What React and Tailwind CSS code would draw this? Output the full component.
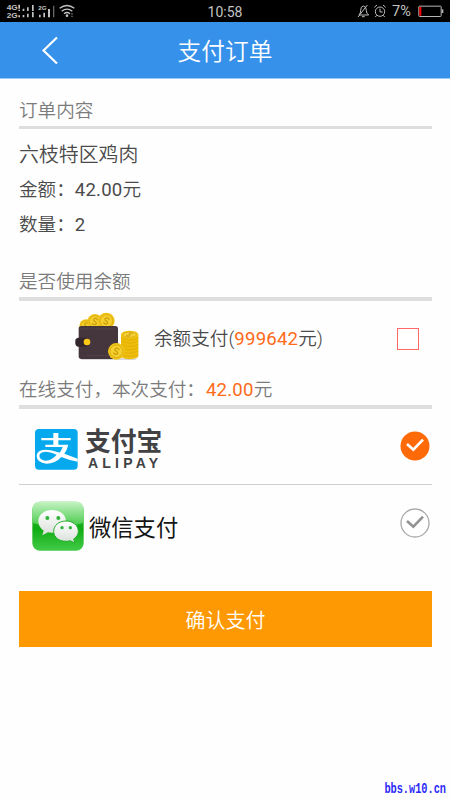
const cjk = "font-['Roboto','Noto_Sans_CJK_SC',sans-serif]";

function StatusBar() {
  return (
    <div className="flex h-[22px] shrink-0 items-center justify-between bg-black">
      <svg className="h-[22px] w-[150px]" viewBox="0 0 450 66" fill="#c4c4c4">
        <g fontFamily="Liberation Sans" fontWeight="700" fontSize="20">
          <text x="20" y="31" textLength="33" lengthAdjust="spacingAndGlyphs">4G</text>
          <text x="20" y="53" textLength="33" lengthAdjust="spacingAndGlyphs">2G</text>
          <text x="115" y="30" fontSize="18" textLength="25" lengthAdjust="spacingAndGlyphs">2G</text>
        </g>
        <path d="M55 14h5v12h-5zM55 29h5v4h-5zM55 46h5v6h-5zM68 26h5v7h-5zM81 22h5v11h-5zM96 15h5v18h-5zM68 45h5v7h-5zM81 41h5v11h-5zM96 36h5v16h-5zM117 44h5v8h-5zM130 38h5v14h-5zM144 27h6v25h-6z" />
        <path d="M159 17h4v35h-4z" fill="#666" />
        <g fill="none" stroke="#c4c4c4" strokeWidth="4">
          <path d="M179 25Q201 8 223 25M185 34Q201 21 217 34M192 41Q201 34 210 41" />
        </g>
        <circle cx="201" cy="47" r="4" />
        <path d="M214 40h4v4h-4zM214 47h4v4h-4z" fill="#777" />
      </svg>
      <span className="pt-[2px] text-[14px] leading-none font-normal text-[#c4c4c4]">10:58</span>
      <div className="flex w-[150px] items-center">
        <svg className="h-[22px] w-[90px]" viewBox="0 0 270 66" fill="none" stroke="#bdbdbd" strokeWidth="3">
          <path d="M177 45Q182 40 182 31Q182 19 190 18Q199 19 199 31Q199 41 206 45ZM186 50h8M202 15L174 51" />
          <circle cx="240" cy="35" r="14" />
          <path d="M240 26v10h8M223 22l8-7M249 15l8 7M230 46l-4 5M250 46l4 5" />
        </svg>
        <span className="w-[28px] pt-[2px] pl-[2px] text-[14.500px] leading-none font-normal text-[#c4c4c4]">7%</span>
        <svg className="h-[22px] w-[32px]" viewBox="0 0 96 66">
          <rect x="2.500" y="18.500" width="67" height="31" rx="2" fill="none" stroke="#b5b5b5" strokeWidth="3" />
          <path d="M71 28h5v11h-5z" fill="#b5b5b5" />
          <path d="M4 21h6v26H4z" fill="#f00" />
        </svg>
      </div>
    </div>
  );
}

function Coin({ x, y, r }) {
  return (
    <g transform={`translate(${x} ${y})`}>
      <circle r={r} fill="#f0c419" />
      <circle r={r * 0.76} fill="#f4cf2d" stroke="#d9aa0d" strokeWidth="2.500" />
      <path d="M7-7Q-1-13-5-7Q-8-2 0 0Q8 2 5 7Q1 12-7 7" fill="none" stroke="#c99a0b" strokeWidth="3.500" transform="rotate(20)" />
    </g>
  );
}

function WalletIcon() {
  return (
    <svg className="h-[65px] w-[85px]" viewBox="0 0 255 195">
      <path d="M45 160H218L210 165H50Z" fill="#d8d8dc" />
      <Coin x={63} y={63} r={20} />
      <Coin x={90} y={50} r={23} />
      <Coin x={124} y={48} r={25} />
      <rect x="41" y="63" width="118" height="99" rx="8" fill="#45363d" />
      <path d="M47 72H153M67 152H150" stroke="#62525a" strokeWidth="2" strokeDasharray="5 4" />
      <path d="M41 98H63Q74 101 74 112Q74 122 63 125H38Q31 122 31 116V107Q31 99 41 98Z" fill="#33272d" />
      <circle cx="66" cy="111" r="10" fill="#fdc914" />
      <path d="M168 88V156Q194 170 220 156V88Z" fill="#eebd0b" />
      <path d="M168 98Q194 111 220 98M168 108Q194 121 220 108M168 118Q194 131 220 118M168 128Q194 141 220 128M168 138Q194 151 220 138M168 148Q194 161 220 148" fill="none" stroke="#deae04" strokeWidth="2.500" />
      <ellipse cx="194" cy="89" rx="26" ry="12" fill="#f2c617" />
      <ellipse cx="194" cy="89" rx="20" ry="8" fill="#f4d139" stroke="#d2a40a" strokeWidth="2" />
      <path d="M203 86Q196 81 192 86Q192 90 196 90Q195 96 184 92" fill="none" stroke="#c99a0b" strokeWidth="3" />
      <Coin x={154} y={139} r={25} />
    </svg>
  );
}

function AlipayIcon() {
  return (
    <svg className="h-[43px] w-[45px]" viewBox="0 0 135 129">
      <rect x="3" y="3" width="128" height="122" rx="12" fill="#06a9ee" />
      <path d="M58 15H73V30H110V37H73V50H103Q99 66 91 77L131 92V101Q108 98 82 87Q64 107 37 107Q9 105 8 85Q8 66 34 65Q52 65 77 74Q83 66 86 57H34V50H58V37H22V30H58ZM68 80Q48 71 34 71Q17 72 16 84Q18 97 35 98Q55 96 68 80Z" fill="#fff" fillRule="evenodd" />
    </svg>
  );
}

function WechatIcon() {
  return (
    <svg className="h-[50px] w-[52px]" viewBox="0 0 156 150">
      <defs>
        <linearGradient id="wxBase" x1="0" y1="0" x2="0" y2="1">
          <stop offset="0" stopColor="#46ca46" />
          <stop offset="0.550" stopColor="#0fac13" />
          <stop offset="1" stopColor="#43cb48" />
        </linearGradient>
        <linearGradient id="wxGloss" x1="0" y1="0" x2="0" y2="1">
          <stop offset="0" stopColor="#c5f3c4" />
          <stop offset="1" stopColor="#42c845" />
        </linearGradient>
        <linearGradient id="wxBubble" x1="0" y1="0" x2="0" y2="1">
          <stop offset="0" stopColor="#fff" />
          <stop offset="1" stopColor="#d9dfd9" />
        </linearGradient>
      </defs>
      <rect x="1" y="2" width="154" height="147" rx="23" fill="url(#wxBase)" />
      <path d="M1 65V25Q1 2 24 2H132Q155 2 155 25V65Q78 90 1 65Z" fill="url(#wxGloss)" />
      <path d="M60 27C37 27 19 41 19 61C19 73 25 82 35 89L31 103L48 94C54 96 66 96 72 94C84 91 102 76 102 59C101 40 83 27 60 27Z" fill="url(#wxBubble)" />
      <path d="M102 60C81 60 65 73 65 91C65 109 81 121 102 121Q109 121 114 119L129 126L125 114C134 108 139 100 139 91C139 73 123 60 102 60Z" fill="url(#wxBubble)" stroke="#27ae2b" strokeWidth="3" />
      <g fill="#2fb33b">
        <circle cx="46" cy="51" r="6" />
        <circle cx="79" cy="51" r="6" />
        <circle cx="90" cy="80" r="5" />
        <circle cx="115" cy="80" r="5" />
      </g>
    </svg>
  );
}

function RadioMark({ checked }) {
  return (
    <svg className="size-[30px]" viewBox="0 0 90 90" fill="none">
      <circle cx="45" cy="45" r={checked ? 43.5 : 42} fill={checked ? "#ff6a08" : "#fff"} stroke={checked ? "none" : "#aaa"} strokeWidth="4" />
      <path d="M21 39L40 56L69 26" stroke={checked ? "#fff" : "#929292"} strokeWidth="8" />
    </svg>
  );
}

export default function App() {
  return (
    <div className={`flex h-[800px] w-[450px] flex-col bg-[#fefefe] text-[18.600px] font-[350] text-[#4a4a4a] ${cjk}`}>
      <StatusBar />
      <header className="flex h-[57px] shrink-0 items-center border-b border-[#9dcbf7] bg-[#3591ea]">
        <svg className="mt-[2px] h-[30px] w-[60px] pl-[40px]" viewBox="0 0 20 30" fill="none">
          <path d="M17 1.500L3.500 14.500L17 27.500" stroke="#fff" strokeWidth="2.200" />
        </svg>
        <h1 className="flex-1 pt-[5px] pr-[60px] text-center text-[23.700px] leading-none font-[350] text-white">支付订单</h1>
      </header>

      <main className="flex flex-1 flex-col pr-[18px] pl-[19px]">
        <h2 className="flex h-[50px] items-end border-b-3 border-[#dedede] pb-px leading-[28px] font-[350] text-[#7b7b7b]">订单内容</h2>
        <div className="flex flex-col pt-[9px] leading-[35px]">
          <p className="text-[19.900px]">六枝特区鸡肉</p>
          <p>金额：<span className="font-normal tracking-[0.200px]">42.00</span>元</p>
          <p>数量：<span className="font-normal">2</span></p>
        </div>

        <h2 className="flex h-[58px] items-end border-b-4 border-[#dedede] pb-px leading-[28px] font-[350] text-[#7b7b7b]">是否使用余额</h2>
        <div className="flex h-[73px] items-center pr-[13px] pl-[46px]">
          <WalletIcon />
          <p className="flex-1 pt-[5px] pl-[4px]">
            余额支付(<span className="font-normal tracking-[0.200px] text-[#ff6a18]">999642</span>元)
          </p>
          <span className="mt-[3px] size-[22px] border border-[#ff6868] bg-white" />
        </div>
        <h2 className="flex h-[35px] items-end border-b-4 border-[#dedede] pb-px leading-[28px] font-[350] text-[#7b7b7b]">
          在线支付，本次支付：<span className="pl-px font-normal tracking-[0.200px] text-[#ff6a18]">42.00</span>元
        </h2>

        <div className="flex h-[76px] items-center border-b border-[#cfcfcf] pl-[15px]">
          <div className="flex flex-1 items-center pt-[5px]">
            <AlipayIcon />
            <div className="flex flex-col pl-[6px] text-[#424244]">
              <span className="text-[25.800px] leading-[27px] font-bold">支付宝</span>
              <span className="pl-[3px] font-['Liberation_Sans',sans-serif] text-[14px] leading-[14px] font-bold tracking-[4.200px]">ALIPAY</span>
            </div>
          </div>
          <div className="pr-[2px] pb-px">
            <RadioMark checked />
          </div>
        </div>
        <div className="flex h-[76px] items-center pl-[13px]">
          <div className="flex flex-1 items-center pt-[5px]">
            <WechatIcon />
            <span className="pt-[4px] pl-[5px] text-[22.300px] leading-[30px] font-normal text-[#151515]">微信支付</span>
          </div>
          <div className="pr-[2px] pb-px">
            <RadioMark />
          </div>
        </div>

        <button className="mt-[30px] flex h-[56px] items-center justify-center bg-[#ff9903] pt-[3px] text-[20px] font-[350] text-white">
          确认支付
        </button>
        <footer className="-mr-[14px] mt-auto pb-px text-right font-['Liberation_Mono',monospace] text-[13px] leading-[18px] font-bold text-[#2a2af5]">
          <span className="inline-block origin-right scale-x-[0.790] scale-y-115">bbs.w10.cn</span>
        </footer>
      </main>
    </div>
  );
}
